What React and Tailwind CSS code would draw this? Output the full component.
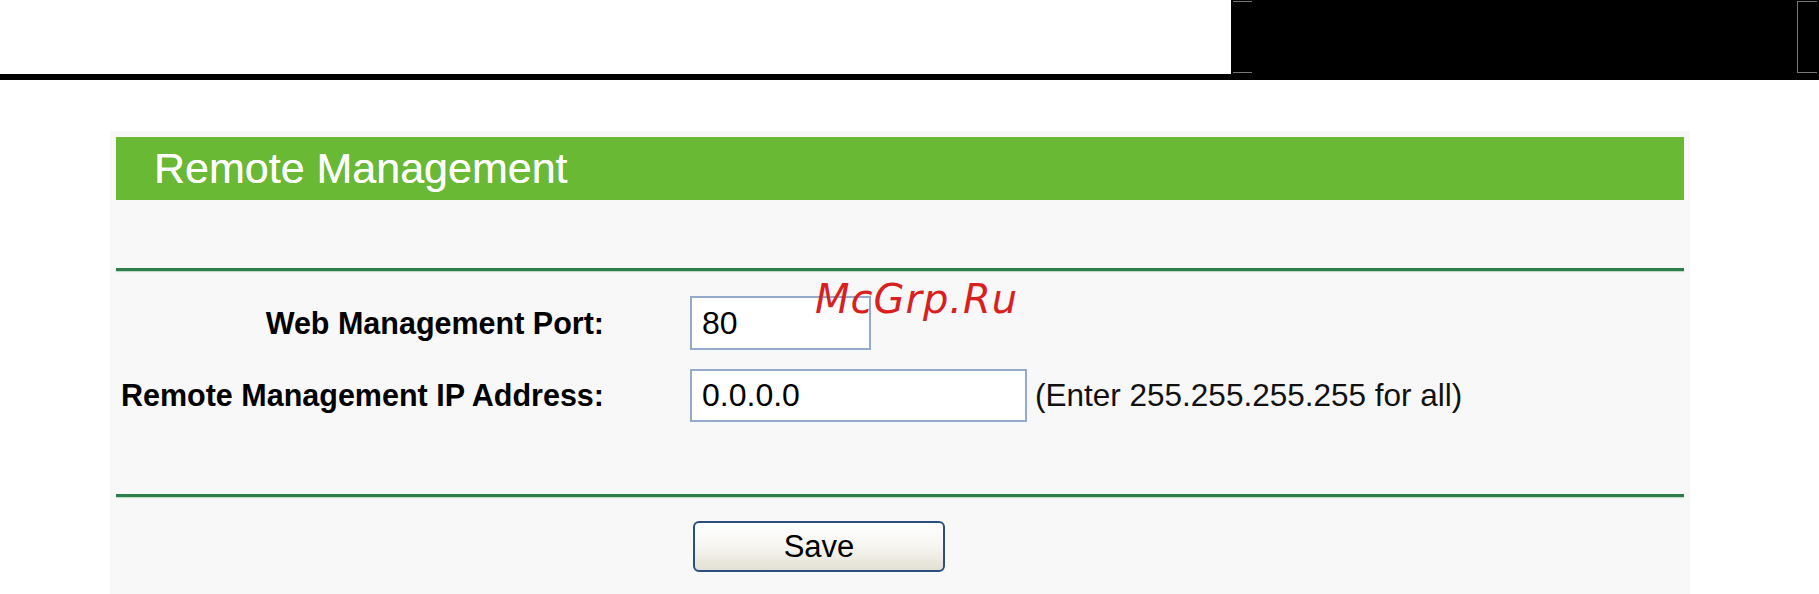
export default function App() {
  return (
    <div className="min-h-[594px] w-full bg-white font-['Liberation_Sans',Arial,sans-serif] text-black">
      {/* top banner */}
      <div className="flex h-[74px] w-full justify-end">
        <div className="relative h-full w-[588px] bg-black">
          <span className="absolute left-[2px] top-[1px] h-px w-[19px] bg-[#777]" />
          <span className="absolute bottom-[1px] left-[2px] h-px w-[19px] bg-[#777]" />
          <span className="absolute right-[2px] top-[1px] h-[72px] w-[20px] border border-l-[#777] border-y-[#777] border-r-0 border-transparent" />
        </div>
      </div>
      <div className="h-[6px] w-full bg-black" />

      {/* settings panel */}
      <div className="relative ml-[110px] mt-[51px] w-[1580px] bg-[#f8f8f8] px-[6px] pb-[22px] pt-[6px]">
        <div className="flex h-[63px] items-center bg-[#69b934] pl-[38px] text-[43px] leading-none text-white [text-shadow:0_0_0.6px_#fff]">
          Remote Management
        </div>

        <div className="mt-[68px] h-[3px] bg-[#2e7d4d] shadow-[0_1px_1px_#b9d9c3]" />

        <div className="mt-[25px] flex flex-col gap-[19px]">
          <div className="flex items-center">
            <div className="w-[488px] whitespace-nowrap text-right text-[30.5px] font-bold leading-none">
              Web Management Port:
            </div>
            <input
              readOnly
              value="80"
              className="ml-[86px] h-[54px] w-[181px] border-2 border-[#93aacb] bg-white px-[10px] text-[32px] text-black outline-none"
            />
          </div>
          <div className="flex items-center">
            <div className="w-[488px] whitespace-nowrap text-right text-[30.5px] font-bold leading-none">
              Remote Management IP Address:
            </div>
            <input
              readOnly
              value="0.0.0.0"
              className="ml-[86px] h-[53px] w-[337px] border-2 border-[#93aacb] bg-white px-[10px] text-[32px] text-black outline-none"
            />
            <span className="ml-[8px] whitespace-nowrap text-[31.5px] leading-none text-[#111]">
              (Enter 255.255.255.255 for all)
            </span>
          </div>
        </div>

        <div className="mt-[72px] h-[3px] bg-[#2e7d4d] shadow-[0_1px_1px_#b9d9c3]" />

        <div className="mt-[24px] pl-[577px]">
          <button className="h-[51px] w-[252px] rounded-[6px] border-2 border-[#2b4f80] bg-gradient-to-b from-white via-[#f6f5f0] to-[#e3e0d3] text-[31px] leading-none text-black">
            Save
          </button>
        </div>

        {/* watermark */}
        <span className="absolute left-[705px] top-[148px] font-['DejaVu_Sans',sans-serif] text-[40px] italic leading-none tracking-[1px] text-[#d91f1f]">
          McGrp.Ru
        </span>
      </div>
    </div>
  );
}
